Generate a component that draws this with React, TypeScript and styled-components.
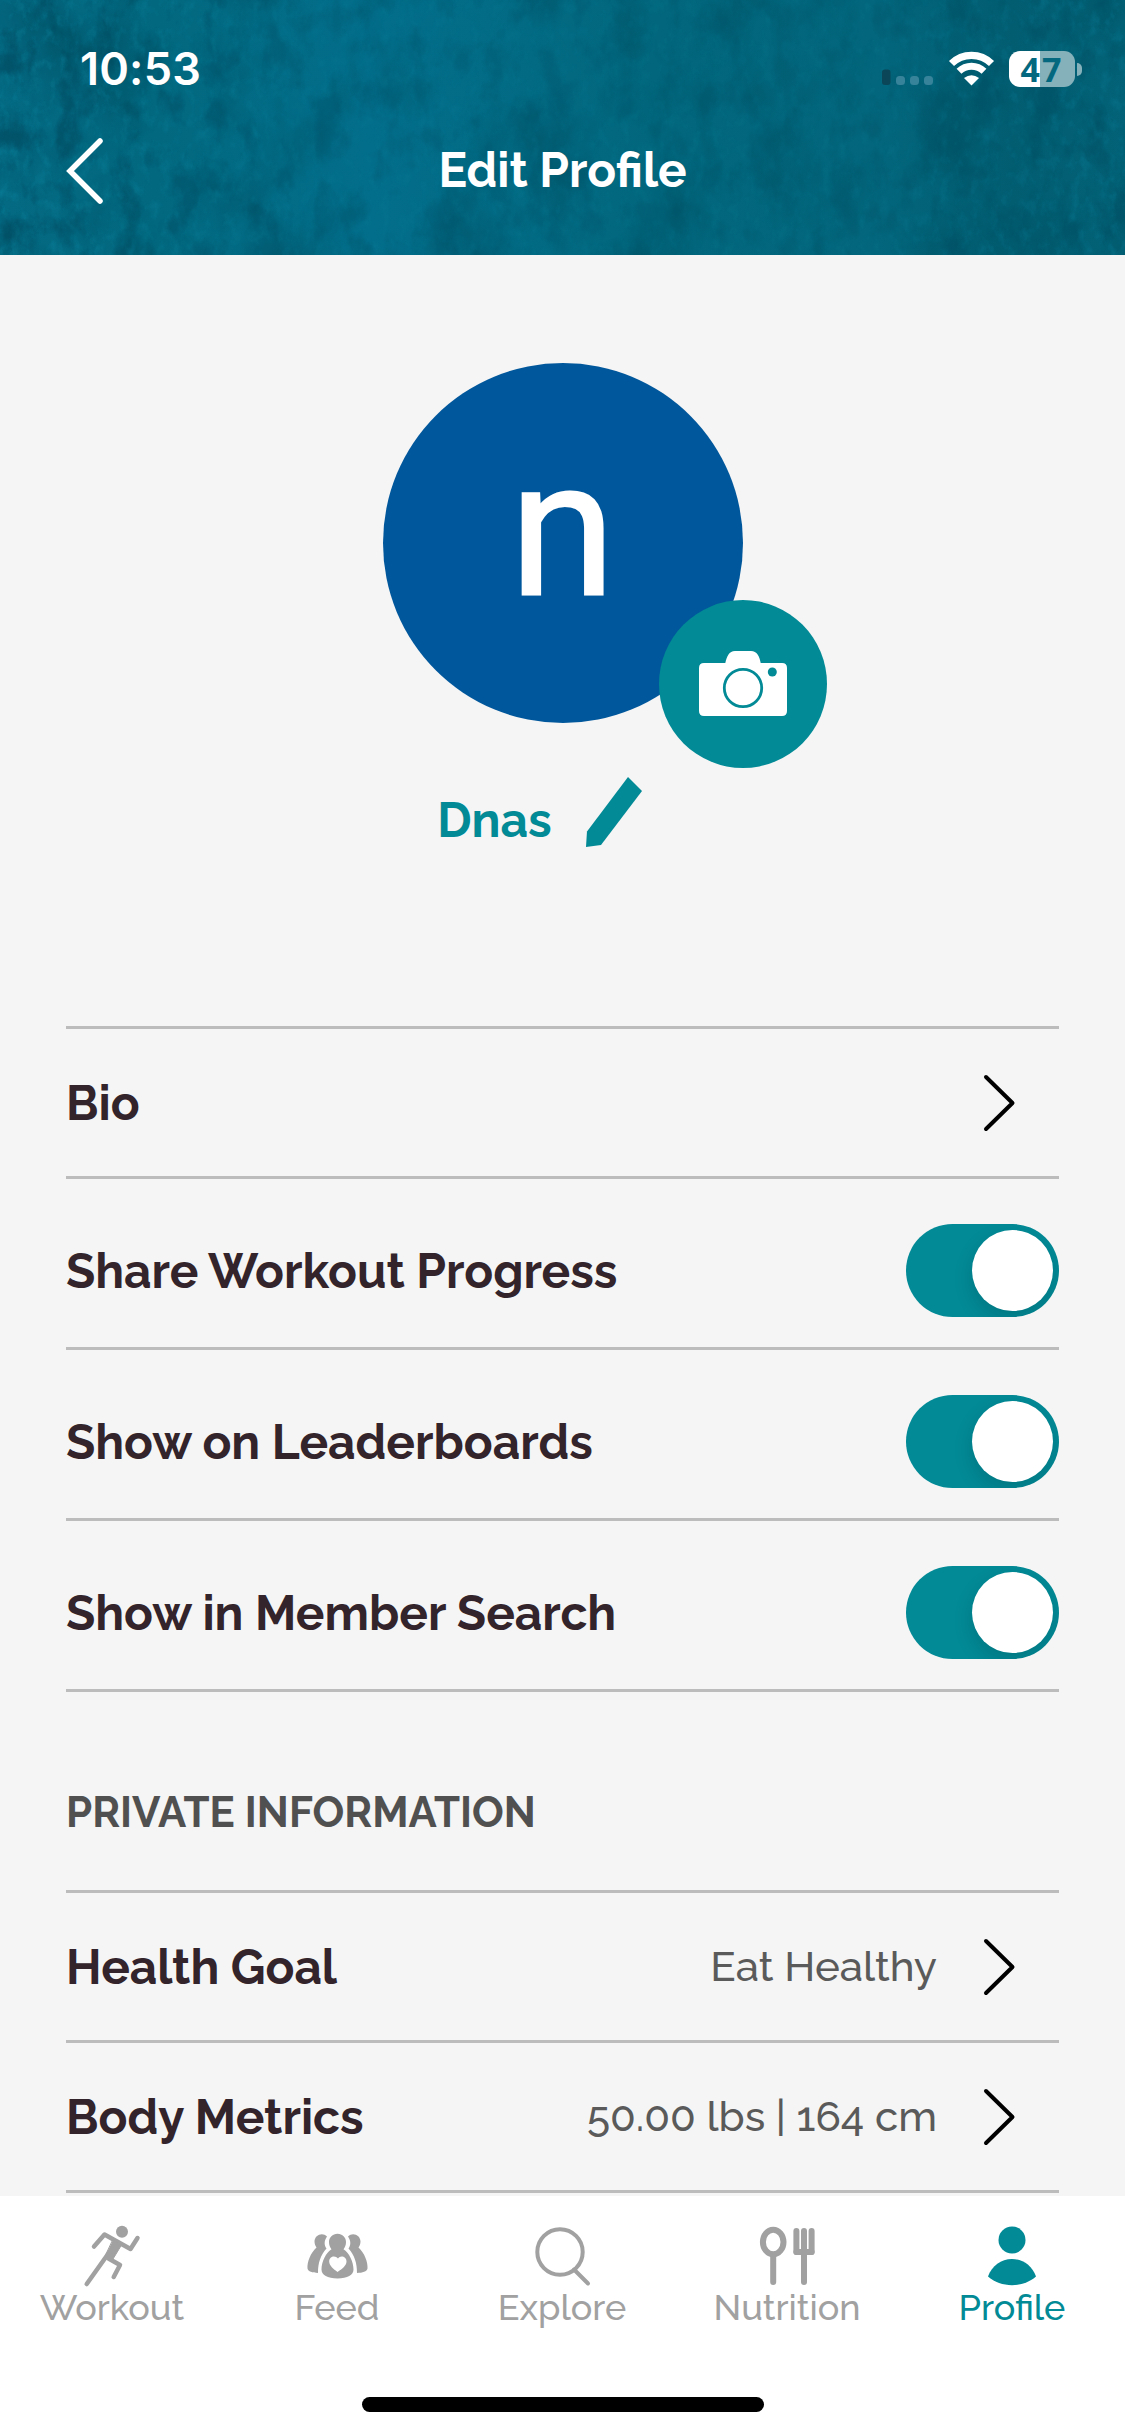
import React from "react";
import styled, { createGlobalStyle } from "styled-components";

const teal = "#028a96";
const grey = "#a1a1a1";
const line = "#bcbcbc";
const brand = `Raleway, Lato, sans-serif`;

const Global = createGlobalStyle`
  *, *::before, *::after { box-sizing: border-box; }
  body { margin: 0; background: #f5f5f5; }
`;

const Screen = styled.div`
  width: 1125px;
  height: 2436px;
  display: flex;
  flex-direction: column;
  overflow: hidden;
  background: #f5f5f5;
  font-family: ${brand};
`;

const Header = styled.header`
  position: relative;
  flex: none;
  height: 255px;
  background: linear-gradient(90deg, #046982 0%, #02687f 14%, #036e8b 33%, #02677d 58%, #03667c 78%, #025d71 90%, #036277 100%);
  color: #fff;
`;

const Texture = styled.svg`
  position: absolute;
  inset: 0;
  width: 100%;
  height: 100%;
`;

const StatusBar = styled.div`
  position: relative;
  display: flex;
  justify-content: space-between;
  align-items: center;
  height: 138px;
  padding: 0 43px 0 80px;
`;

const Clock = styled.span`
  font: 600 45px/54px Inter, sans-serif;
  letter-spacing: 0.2px;
`;

const Indicators = styled.div`
  display: flex;
  align-items: center;
`;

const SignalIcon = styled.svg`
  width: 51px;
  height: 36px;
  margin-right: 15px;
`;

const WifiIcon = styled.svg`
  width: 47px;
  height: 36px;
  margin-right: 14px;
`;

const Battery = styled.div`
  display: flex;
  align-items: center;
  justify-content: center;
  width: 66px;
  height: 36px;
  border-radius: 11px;
  background: linear-gradient(90deg, #fff 31px, #85b1bb 31px);
  color: #04697f;
  font: 700 34px/36px "Open Sans", sans-serif;
  letter-spacing: 2px;
`;

const BatteryNub = styled.span`
  width: 5px;
  height: 13px;
  margin-left: 2px;
  border-radius: 0 5px 5px 0;
  background: #85b1bb;
`;

const TitleBar = styled.div`
  position: relative;
  display: grid;
  grid-template-columns: 145px 1fr 145px;
  align-items: center;
  height: 64px;
`;

const BackButton = styled.button`
  display: flex;
  justify-content: flex-end;
  padding: 0 42px 0 0;
  border: 0;
  background: none;
`;

const Title = styled.h1`
  margin: 0;
  padding-bottom: 2px;
  text-align: center;
  font-size: 47.7px;
  font-weight: 700;
  line-height: 56px;
`;

const Content = styled.main`
  flex: none;
  height: 1941px;
  padding: 108px 66px 0;
`;

const Identity = styled.section`
  display: flex;
  flex-direction: column;
  align-items: center;
  height: 663px;
`;

const Avatar = styled.div`
  position: relative;
  width: 360px;
  height: 360px;
  border-radius: 50%;
  background: #01579b;
  color: #fff;
  text-align: center;
  font: 400 192px/332px Roboto, sans-serif;
  -webkit-text-stroke: 2px #fff;
`;

const CameraButton = styled.button`
  position: absolute;
  left: 276px;
  top: 237px;
  display: grid;
  place-items: center;
  width: 168px;
  height: 168px;
  padding: 0;
  border: 0;
  border-radius: 50%;
  background: ${teal};
`;

const NameRow = styled.div`
  display: flex;
  align-items: flex-start;
  gap: 34px;
  margin-top: 54px;
  padding-right: 46px;
`;

const Name = styled.span`
  margin-top: 15px;
  color: ${teal};
  font-size: 48px;
  font-weight: 700;
  line-height: 56px;
`;

const List = styled.section`
  border-top: 3px solid ${line};
`;

const Row = styled.div<{ $tall?: boolean }>`
  display: flex;
  align-items: center;
  justify-content: space-between;
  height: ${p => (p.$tall ? 171 : 150)}px;
  padding-top: ${p => (p.$tall ? 15 : 0)}px;
  border-bottom: 3px solid ${line};
`;

const Label = styled.span`
  color: #32242a;
  font-size: 47.8px;
  font-weight: 700;
  line-height: 56px;
`;

const Detail = styled.span`
  display: flex;
  align-items: center;
  gap: 46px;
  padding-right: 43px;
  color: #5a5a5a;
  font-size: 42px;
  font-weight: 500;
  line-height: 50px;
`;

const Toggle = styled.span`
  display: flex;
  justify-content: flex-end;
  width: 153px;
  height: 93px;
  padding: 6px;
  border-radius: 47px;
  background: ${teal};
  overflow: hidden;
`;

const Knob = styled.span`
  width: 81px;
  height: 81px;
  border-radius: 50%;
  background: #fff;
  box-shadow: 0 8px 20px rgba(0, 0, 0, 0.14);
`;

const SectionTitle = styled.h2`
  margin: 0;
  height: 198px;
  padding-top: 96px;
  color: #505050;
  font-size: 42px;
  font-weight: 700;
  line-height: 50px;
`;

const Tabs = styled.nav`
  flex: 1;
  display: flex;
  flex-direction: column;
  align-items: center;
  background: #fff;
`;

const TabRow = styled.div`
  display: grid;
  grid-template-columns: repeat(5, 225px);
  height: 201px;
  padding-top: 26px;
`;

const Tab = styled.a<{ $active?: boolean }>`
  display: flex;
  flex-direction: column;
  align-items: center;
  padding-right: 1px;
  color: ${p => (p.$active ? teal : grey)};
  font-size: 36px;
  font-weight: 500;
  line-height: 42px;
`;

const TabIcon = styled.svg`
  width: 80px;
  height: 66px;
  margin-bottom: -2px;
  overflow: visible;
`;

const HomeIndicator = styled.div`
  width: 402px;
  height: 15px;
  border-radius: 8px;
  background: #000;
`;

const Chevron = () => (
  <svg width="33" height="58" viewBox="0 0 33 58" fill="none" stroke="#000" strokeWidth="4" strokeLinecap="round" strokeLinejoin="round">
    <path d="M3 3 29.5 29 3 55" />
  </svg>
);

const Switch = () => (
  <Toggle role="switch" aria-checked="true">
    <Knob />
  </Toggle>
);

const ShareSettings: string[] = ["Share Workout Progress", "Show on Leaderboards", "Show in Member Search"];

export default function App() {
  return (
    <Screen>
      <Global />
      <Header>
        <Texture aria-hidden="true" colorInterpolationFilters="sRGB">
          <filter id="stains" x="0" y="0" width="100%" height="100%">
            <feTurbulence type="fractalNoise" baseFrequency="0.014 0.009" numOctaves="8" seed="8" />
            <feColorMatrix values="0 0 0 0 0  0 0 0 0 0.3  0 0 0 0 0.37  2.6 0 0 0 -1.2" />
          </filter>
          <filter id="grain" x="0" y="0" width="100%" height="100%">
            <feTurbulence type="fractalNoise" baseFrequency="0.1 0.07" numOctaves="6" seed="21" />
            <feColorMatrix values="0 0 0 0 0.04  0 0 0 0 0.5  0 0 0 0 0.6  0 2.4 0 0 -1.15" />
          </filter>
          <filter id="cracks" x="0" y="0" width="100%" height="100%">
            <feTurbulence type="fractalNoise" baseFrequency="0.035 0.025" numOctaves="6" seed="5" />
            <feColorMatrix values="0 0 0 0 0  0 0 0 0 0.26  0 0 0 0 0.34  0 4.5 0 0 -2.3" />
          </filter>
          <linearGradient id="fade">
            <stop offset="0" stopColor="#fff" />
            <stop offset="0.3" stopColor="#fff" stopOpacity="0.4" />
            <stop offset="0.75" stopColor="#fff" stopOpacity="0.35" />
            <stop offset="1" stopColor="#fff" stopOpacity="0.7" />
          </linearGradient>
          <mask id="edge">
            <rect width="100%" height="100%" fill="url(#fade)" />
          </mask>
          <rect width="100%" height="100%" filter="url(#stains)" opacity="0.55" />
          <g mask="url(#edge)">
            <rect width="100%" height="100%" filter="url(#grain)" opacity="0.6" />
            <rect width="100%" height="100%" filter="url(#cracks)" opacity="0.5" />
          </g>
        </Texture>
        <StatusBar>
          <Clock>10:53</Clock>
          <Indicators>
            <SignalIcon viewBox="0 0 51 36">
              <rect x="0" y="18.5" width="8.5" height="15.5" rx="3" fill="#0b4658" />
              <g fill="#37839a">
                <rect x="14" y="25" width="9" height="9" rx="3.5" />
                <rect x="28" y="25" width="9" height="9" rx="3.5" />
                <rect x="42" y="25" width="9" height="9" rx="3.5" />
              </g>
            </SignalIcon>
            <WifiIcon viewBox="0 0 47 36" fill="none" stroke="#fff">
              <path d="M3.5 12.5A28.5 28.5 0 0 1 43.5 12.5" strokeWidth="7.200" />
              <path d="M11 20.2A18 18 0 0 1 36 20.2" strokeWidth="7" />
              <path d="M23.500 34.500 16 27Q23.500 21.400 31 27Z" fill="#fff" stroke="none" />
            </WifiIcon>
            <Battery>47</Battery>
            <BatteryNub />
          </Indicators>
        </StatusBar>
        <TitleBar>
          <BackButton aria-label="Back">
            <svg width="38" height="66" viewBox="0 0 38 66" fill="none" stroke="#fff" strokeWidth="5.500" strokeLinecap="round" strokeLinejoin="miter">
              <path d="M35 3 5 33 35 63" />
            </svg>
          </BackButton>
          <Title>Edit Profile</Title>
        </TitleBar>
      </Header>

      <Content>
        <Identity>
          <Avatar>
            n
            <CameraButton aria-label="Change photo">
              <svg width="88" height="66" viewBox="0 0 88 66">
                <path d="M5 12H26.300C28 5 30 0 36 0H52C58 0 60.500 5 61.700 12H83Q88 12 88 17V60Q88 65 83 65H5Q0 65 0 60V17Q0 12 5 12Z" fill="#fff" />
                <circle cx="44" cy="37" r="18.700" fill="none" stroke={teal} strokeWidth="2.800" />
                <circle cx="73.300" cy="21" r="4.500" fill={teal} />
              </svg>
            </CameraButton>
          </Avatar>
          <NameRow>
            <Name>Dnas</Name>
            <svg width="56" height="70" viewBox="0 0 56 70">
              <path d="M42 0 56 14 15 68 0 70 1 54.500Z" fill={teal} />
            </svg>
          </NameRow>
        </Identity>

        <List>
          <Row>
            <Label>Bio</Label>
            <Detail><Chevron /></Detail>
          </Row>
          {ShareSettings.map(s => (
            <Row key={s} $tall>
              <Label>{s}</Label>
              <Switch />
            </Row>
          ))}
        </List>

        <SectionTitle>PRIVATE INFORMATION</SectionTitle>
        <List>
          <Row>
            <Label>Health Goal</Label>
            <Detail>Eat Healthy<Chevron /></Detail>
          </Row>
          <Row>
            <Label>Body Metrics</Label>
            <Detail>50.00 lbs | 164 cm<Chevron /></Detail>
          </Row>
        </List>
      </Content>

      <Tabs>
        <TabRow>
          <Tab>
            <TabIcon viewBox="72 2222 80 66" fill="none" stroke={grey} strokeWidth="4.500" strokeLinecap="round" strokeLinejoin="round">
              <circle cx="122" cy="2231.800" r="6" fill={grey} stroke="none" />
              <path d="M94 2246.500 104.500 2234.500 130.500 2249 137.500 2238" />
              <path d="M113 2240 121.500 2245 113 2259 106 2255Z" fill={grey} strokeWidth="1" />
              <path d="M109.500 2252 86.700 2284" />
              <path d="M108.500 2258.500 120 2265 113.700 2277" />
            </TabIcon>
            Workout
          </Tab>
          <Tab>
            <TabIcon viewBox="297.500 2222 80 66" fill={grey}>
              <path d="M327.500 2236.500C323 2231.500 315 2235 315 2241.500C315 2244 316 2246 317 2247.500C311 2253 307.500 2262 308 2268.500C308.500 2271.500 313 2272.800 318.500 2273C318.500 2263 321 2255 327 2248.500C324.500 2245 324.500 2241 327.500 2236.500Z" />
              <path d="M348.500 2236.500C353 2231.500 361 2235 361 2241.500C361 2244 360 2246 359 2247.500C365 2253 368.500 2262 368 2268.500C367.500 2271.500 363 2272.800 357.500 2273C357.500 2263 355 2255 349 2248.500C351.500 2245 351.500 2241 348.500 2236.500Z" />
              <path
                fillRule="evenodd"
                d="M338 2233.800C343 2233.800 346.500 2237.500 346.500 2242C346.500 2245 345.500 2247.500 344 2249.300C349.500 2252.500 354 2262 354 2269.500C354 2275 348 2278.500 338 2278.500C328 2278.500 322 2275 322 2269.500C322 2262 326.500 2252.500 332 2249.300C330.500 2247.500 329.500 2245 329.500 2242C329.500 2237.500 333 2233.800 338 2233.800ZM338 2272C342.500 2269 347 2265.500 347 2261.500C347 2256 340.500 2255 338.500 2258.500C336 2255 329.700 2256 329.700 2261.500C329.700 2265.500 334 2269 338 2272Z"
              />
            </TabIcon>
            Feed
          </Tab>
          <Tab>
            <TabIcon viewBox="522.500 2222 80 66" fill="none" stroke={grey} strokeWidth="4" strokeLinecap="round">
              <circle cx="560.500" cy="2252" r="22.700" />
              <path d="M574.500 2269.500 588.500 2283.500" />
            </TabIcon>
            Explore
          </Tab>
          <Tab>
            <TabIcon viewBox="747.500 2222 80 66" fill="none" stroke={grey} strokeWidth="6" strokeLinecap="round">
              <ellipse cx="773.700" cy="2242" rx="10.300" ry="12.300" />
              <path d="M773.700 2256V2282" />
              <path d="M804.500 2250V2282" />
              <path d="M796.900 2231V2252M804.500 2231V2252M812.100 2231V2252" />
              <path d="M796.900 2252H812.100" />
            </TabIcon>
            Nutrition
          </Tab>
          <Tab $active>
            <TabIcon viewBox="972.500 2222 80 66" fill={teal}>
              <ellipse cx="1012.500" cy="2240" rx="13.500" ry="13.500" />
              <path d="M988.500 2276.500C992.500 2265.500 1001.500 2259 1012.500 2259C1023.500 2259 1032.500 2265.500 1036.500 2276.500C1030 2282 1021.500 2285.200 1012.500 2285.200C1003.500 2285.200 995 2282 988.500 2276.500Z" />
            </TabIcon>
            Profile
          </Tab>
        </TabRow>
        <HomeIndicator />
      </Tabs>
    </Screen>
  );
}
